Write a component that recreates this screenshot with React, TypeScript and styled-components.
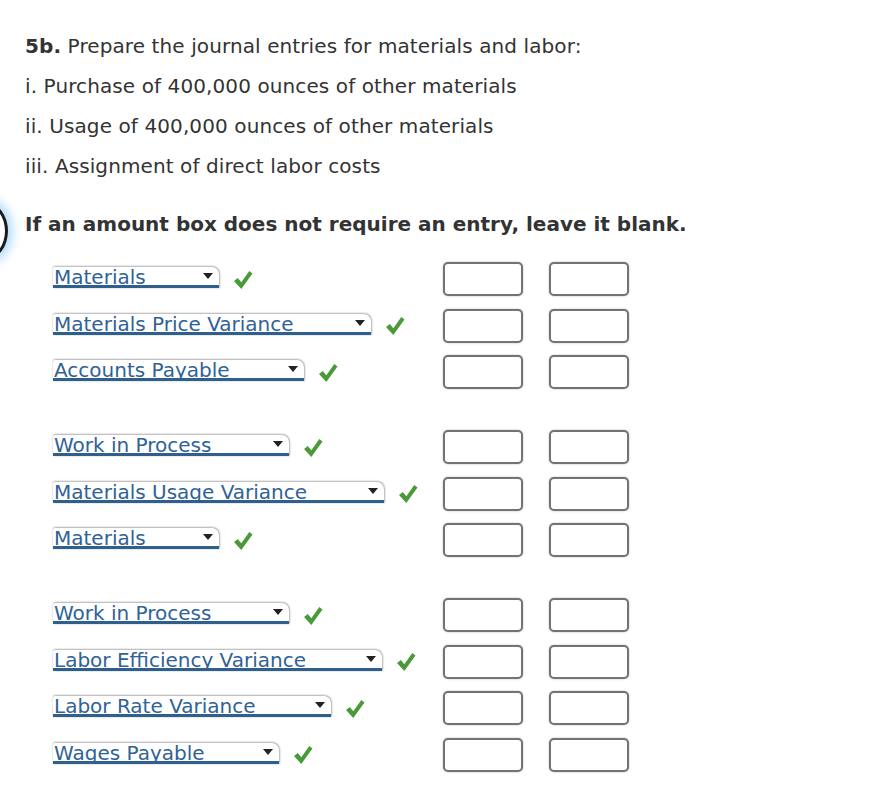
import React from "react";
import styled, { createGlobalStyle } from "styled-components";

const GlobalStyle = createGlobalStyle`
    body {
        margin: 0;
        background: #ffffff;
        font-family: "DejaVu Sans", Verdana, sans-serif;
        color: #333333;
    }
`;

interface Entry {
    account: string;
    width: number;
}

// three journal entries, each a list of account lines
const groups: Entry[][] = [
    [
        { account: "Materials", width: 166 },
        { account: "Materials Price Variance", width: 318 },
        { account: "Accounts Payable", width: 251 },
    ],
    [
        { account: "Work in Process", width: 236 },
        { account: "Materials Usage Variance", width: 331 },
        { account: "Materials", width: 166 },
    ],
    [
        { account: "Work in Process", width: 236 },
        { account: "Labor Efficiency Variance", width: 329 },
        { account: "Labor Rate Variance", width: 278 },
        { account: "Wages Payable", width: 226 },
    ],
];

const Check = () => (
    <CheckIcon viewBox="0 0 20 20">
        <path d="M1 11 L4.8 8 L8.3 12.3 L16.3 1 L19.5 3.5 L8.3 19 Z" />
    </CheckIcon>
);

const App = () => {
    return (
        <>
            <GlobalStyle />
            <Page>
                <FocusRing />
                <Line>
                    <b>5b.</b> Prepare the journal entries for materials and labor:
                </Line>
                <Line>i. Purchase of 400,000 ounces of other materials</Line>
                <Line>ii. Usage of 400,000 ounces of other materials</Line>
                <Line>iii. Assignment of direct labor costs</Line>
                <Instruction>If an amount box does not require an entry, leave it blank.</Instruction>
                <Entries>
                    {groups.map((group, gi) => (
                        <Group key={gi}>
                            {group.map((entry, ei) => (
                                <Row key={ei}>
                                    <AccountCell>
                                        <Select $w={entry.width}>
                                            <span>{entry.account}</span>
                                            <Arrow />
                                        </Select>
                                        <Check />
                                    </AccountCell>
                                    <Amount />
                                    <Amount />
                                </Row>
                            ))}
                        </Group>
                    ))}
                </Entries>
            </Page>
        </>
    );
};

export default App;

const Page = styled.div`
    position: relative;
    padding: 26px 0 0 25px;
    width: 845px;
    height: 768px;
    overflow: hidden;
`;

const FocusRing = styled.div`
    position: absolute;
    left: -34px;
    top: 203px;
    width: 36px;
    height: 50px;
    border: 3px solid #1a1a1a;
    border-radius: 50%;
    box-shadow: 0 0 10px 5px rgba(90, 180, 255, 0.45);
`;

const Line = styled.div`
    font-size: 20px;
    letter-spacing: 0.1px;
    line-height: 40px;
    height: 40px;
    color: #333333;
`;

const Instruction = styled.div`
    margin-top: 18px;
    font-size: 20px;
    font-weight: bold;
    line-height: 40px;
    color: #333333;
`;

const Entries = styled.div`
    display: flex;
    flex-direction: column;
    gap: 41px;
    margin-top: 18px;
    padding-left: 28px;
`;

const Group = styled.div`
    display: flex;
    flex-direction: column;
    gap: 12.5px;
`;

const Row = styled.div`
    display: grid;
    grid-template-columns: 364px 80px 80px;
    column-gap: 26px;
    align-items: center;
    height: 34px;
`;

const AccountCell = styled.div`
    display: flex;
    align-items: center;
    gap: 14px;
    padding-bottom: 3px;
    white-space: nowrap;
`;

const Select = styled.div<{ $w: number }>`
    box-sizing: border-box;
    flex: none;
    display: flex;
    align-items: flex-end;
    justify-content: space-between;
    width: ${(p) => p.$w}px;
    height: 21px;
    padding: 0 6px 0 1px;
    background: #ffffff;
    border-bottom: 3px solid #2e5f8d;
    border-radius: 2px 7px 0 0;
    box-shadow: 0 -1px 2px rgba(0, 0, 0, 0.25), 1px 0 2px rgba(0, 0, 0, 0.25);
    font-size: 20px;
    line-height: 16px;
    color: #2f6296;
    white-space: nowrap;
`;

const Arrow = styled.i`
    align-self: center;
    width: 0;
    height: 0;
    border-left: 5px solid transparent;
    border-right: 5px solid transparent;
    border-top: 6px solid #222222;
`;

const CheckIcon = styled.svg`
    flex: none;
    width: 20px;
    height: 20px;
    margin-top: 4px;
    fill: #4a9a3a;
`;

const Amount = styled.div`
    box-sizing: border-box;
    width: 80px;
    height: 34px;
    border: 2px solid #737373;
    border-radius: 5px;
    background: #ffffff;
    box-shadow: 0 0 2px rgba(0, 0, 0, 0.3);
`;
